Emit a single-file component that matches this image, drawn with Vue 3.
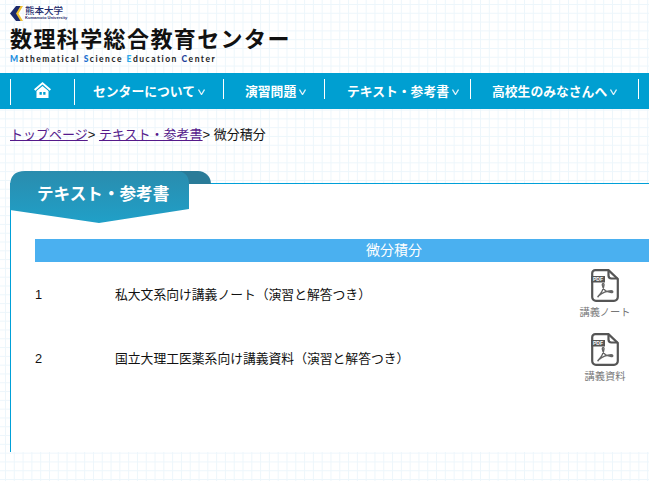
<script setup>
const navItems = [
  { label: 'センターについて', w: 149, pad: 18 },
  { label: '演習問題', w: 101, pad: 21 },
  { label: 'テキスト・参考書', w: 146, pad: 22 },
  { label: '高校生のみなさんへ', w: 168, pad: 21 }
]
const rows = [
  { no: 1, title: '私大文系向け講義ノート（演習と解答つき）', label: '講義ノート' },
  { no: 2, title: '国立大理工医薬系向け講義資料（演習と解答つき）', label: '講義資料' }
]
</script>

<template>
  <div class="page">
    <header class="head">
      <div class="univ">
        <svg class="chev" width="13" height="15" viewBox="0 0 13 15">
          <path d="M7.500 0h5.500L8.500 7.500 13 15H7.500L3 7.500z" fill="#f2c230" />
          <path d="M6 0h4.500L6 7.500 10.500 15H6L0 7.500z" fill="#1d2a6b" />
        </svg>
        <div class="univ-text">
          <span class="univ-ja">熊本大学</span>
          <span class="univ-en">Kumamoto University</span>
        </div>
      </div>
      <div class="title">数理科学総合教育センター</div>
      <div class="sub"><b class="c1">M</b>athematical <b class="c2">S</b>cience <b class="c3">E</b>ducation <b class="c4">C</b>enter</div>
    </header>

    <nav class="nav">
      <a class="home">
        <svg width="17" height="16" viewBox="0 0 17 16">
          <path d="M8.500 0 0 7.300l1.300 1.400L8.500 2.600l7.200 6.100L17 7.300z" fill="#fff" />
          <path fill-rule="evenodd" d="M8.500 4 2.500 9v7h12V9zM5.500 10h2.300v2.800H5.500zm3.700 0h2.300v2.800H9.200z" fill="#fff" />
        </svg>
      </a>
      <a v-for="n in navItems" :key="n.label" class="item" :style="{ width: n.w + 'px', paddingLeft: n.pad + 'px' }">
        <span>{{ n.label }}</span><svg class="caret" width="7" height="6" viewBox="0 0 7 6"><path d="M.5.500 3.500 5.500 6.500.500" fill="none" stroke="#dff2fa" stroke-width="1.300" /></svg>
      </a>
    </nav>

    <div class="crumb">
      <a class="link">トップページ</a>&gt; <a class="link">テキスト・参考書</a>&gt; 微分積分
    </div>

    <section class="panel">
      <div class="fold"></div>
      <div class="tab"><span>テキスト・参考書</span></div>
      <div class="table">
        <div class="thead">微分積分</div>
        <div v-for="r in rows" :key="r.no" class="row">
          <div>{{ r.no }}</div>
          <div>{{ r.title }}</div>
          <div class="doc">
            <svg width="28" height="33" viewBox="0 0 28 33">
              <path d="M4.300 1.200H17.500L26.800 10V28a3.800 3.800 0 0 1-3.800 3.800H5A3.800 3.800 0 0 1 1.200 28V4.300a3.100 3.100 0 0 1 3.100-3.100z" fill="#fff" stroke="#555" stroke-width="2.200" />
              <path d="M17.500 1.500V6.500a3 3 0 0 0 3 3h6.300" fill="none" stroke="#555" stroke-width="2.200" />
              <rect x="0" y="7" width="14" height="6.500" fill="#555" />
              <path d="M7 27.500c3-3 5.500-7 6-11.500.2-2-1.800-2-1.700 0 .5 4 4 7 9 7.500 2 .2 2-1.800 0-1.800-5 .2-9 2-12.500 5-1 1-.3 1.500-.8.8z" fill="none" stroke="#666" stroke-width="1.400" />
              <text x="7" y="12.200" class="pdf" text-anchor="middle">PDF</text>
            </svg>
            <span class="doc-label">{{ r.label }}</span>
          </div>
        </div>
      </div>
    </section>
  </div>
</template>

<style>
html, body { margin: 0; padding: 0; }
</style>

<style scoped>
.page {
  width: 649px;
  height: 481px;
  overflow: hidden;
  font-family: "Liberation Sans", "Noto Sans CJK JP", sans-serif;
  font-size: 12.8px;
  color: #111;
  background-color: #fff;
  background-image:
    linear-gradient(to right, #edf6fb 1px, transparent 1px),
    linear-gradient(to bottom, #edf6fb 1px, transparent 1px);
  background-size: 8.8px 8.8px;
  background-position: 5px 4px;
}
.head {
  height: 73px;
  box-sizing: border-box;
  padding: 5px 0 0 10px;
  display: flex;
  flex-direction: column;
}
.univ { display: flex; align-items: flex-start; gap: 2px; height: 16px; }
.chev { margin-top: 1px; }
.univ-text { display: flex; flex-direction: column; color: #1d2a6b; }
.univ-ja { font-family: "Noto Sans CJK JP", sans-serif; font-size: 9.500px; line-height: 11px; font-weight: 500; }
.univ-en { font-size: 4.100px; line-height: 4px; font-weight: 700; white-space: nowrap; }
.title {
  margin-top: 0;
  font-family: "Noto Sans CJK JP", sans-serif;
  font-size: 22px;
  line-height: 32px;
  font-weight: 700;
  letter-spacing: 1.4px;
  color: #111;
  white-space: nowrap;
}
.sub {
  margin-top: 1px;
  font-family: "Lato", sans-serif;
  font-size: 8.500px;
  line-height: 11px;
  font-weight: 700;
  letter-spacing: 1.5px;
  color: #222;
  white-space: nowrap;
}
.sub b { font-weight: 900; }
.c1 { color: #1b8fe0; }
.c2 { color: #1b6fd0; }
.c3 { color: #28a8e8; }
.c4 { color: #1d3f9a; }
.nav {
  height: 36px;
  box-sizing: border-box;
  padding: 6px 0 0 10px;
  background: #009fd1;
  display: flex;
  align-items: flex-start;
  color: #fff;
}
.home {
  width: 65px;
  height: 26px;
  box-sizing: border-box;
  border-left: 1px solid #fff;
  border-right: 1px solid #fff;
  display: flex;
  justify-content: center;
  padding-top: 3px;
}
.item {
  height: 20px;
  box-sizing: border-box;
  border-right: 1px solid #fff;
  font-weight: 700;
  font-size: 12.8px;
  line-height: 26px;
  white-space: nowrap;
  display: flex;
  align-items: flex-start;
  gap: 3px;
  flex: none;
}
.caret { margin-top: 10px; }
.crumb {
  height: 61px;
  box-sizing: border-box;
  padding: 16px 0 0 10px;
  font-size: 13px;
  line-height: 19px;
  white-space: nowrap;
}
.link { color: #551a8b; text-decoration: underline; }
.panel {
  position: relative;
  width: 760px;
  height: 269px;
  margin: 13px 0 0 10px;
  box-sizing: border-box;
  border-left: 1px solid #00a0d8;
  border-top: 1px solid #00a0d8;
  background: #fff;
  padding: 55px 0 0 24px;
}
.fold {
  position: absolute;
  left: 160px;
  top: -13px;
  width: 40px;
  height: 13px;
  background: #2a7b98;
  border-radius: 0 13px 0 0;
}
.tab {
  position: absolute;
  left: -1px;
  top: -13px;
  width: 179px;
  height: 52px;
  background: linear-gradient(#2a8cae, #20a0c8);
  clip-path: path("M0 52 V15 Q0 0 15 0 H165 Q179 0 179 13 V38 L89 52 L0 39 Z");
  color: #fff;
  font-size: 16.6px;
  font-weight: 700;
  line-height: 47px;
  padding-left: 27px;
  box-sizing: border-box;
}
.table { width: 718px; }
.thead {
  height: 23px;
  background: #4ab0f0;
  color: #fff;
  text-align: center;
  font-size: 14px;
  line-height: 23px;
}
.row {
  display: grid;
  grid-template-columns: 80px 342px 296px;
  height: 64px;
  align-items: start;
  line-height: 19px;
}
.row > div:not(.doc) { padding-top: 23px; }
.doc {
  padding-top: 7px;
  display: flex;
  flex-direction: column;
  align-items: center;
}
.doc-label { font-size: 10.24px; line-height: 14px; margin-top: 4px; color: #777; }
.pdf { font-size: 5px; font-weight: 700; fill: #fff; font-family: "Liberation Sans", sans-serif; }
</style>
